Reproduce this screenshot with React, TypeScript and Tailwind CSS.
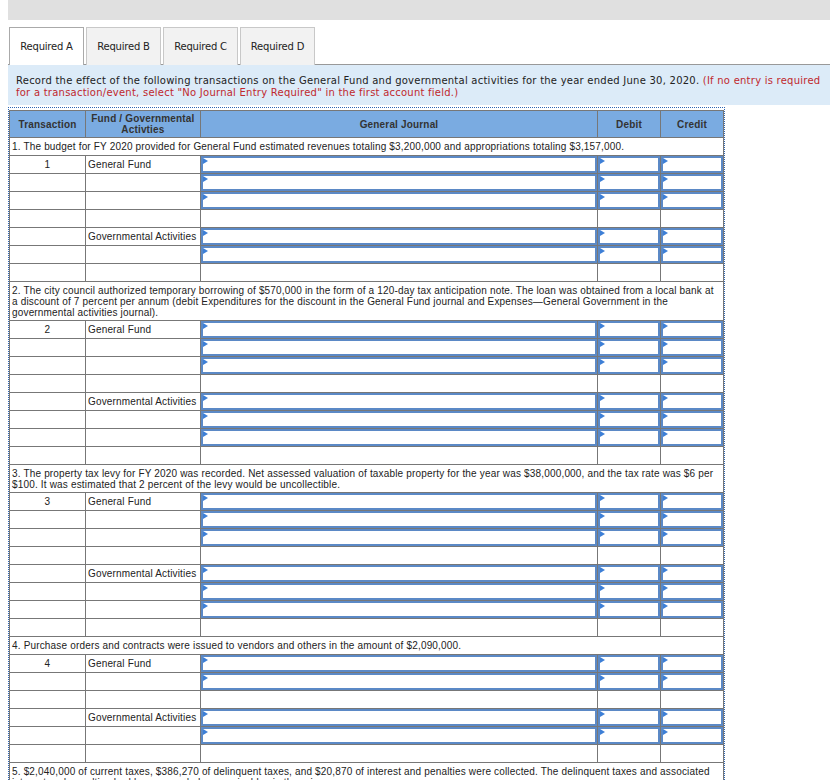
import React from 'react';

type Row =
  | { kind: 'desc'; text: string }
  | { kind: 'entry'; num?: string; fund?: string; input: boolean };

const desc = (text: string): Row => ({ kind: 'desc', text });
const entry = (input: boolean, fund?: string, num?: string): Row => ({ kind: 'entry', input, fund, num });

const rows: Row[] = [
  desc('1. The budget for FY 2020 provided for General Fund estimated revenues totaling $3,200,000 and appropriations totaling $3,157,000.'),
  entry(true, 'General Fund', '1'),
  entry(true),
  entry(true),
  entry(false),
  entry(true, 'Governmental Activities'),
  entry(true),
  entry(false),
  desc(
    '2. The city council authorized temporary borrowing of $570,000 in the form of a 120-day tax anticipation note. The loan was obtained from a local bank at a discount of 7 percent per annum (debit Expenditures for the discount in the General Fund journal and Expenses\u2014General Government in the governmental activities journal).'
  ),
  entry(true, 'General Fund', '2'),
  entry(true),
  entry(true),
  entry(false),
  entry(true, 'Governmental Activities'),
  entry(true),
  entry(true),
  entry(false),
  desc(
    '3. The property tax levy for FY 2020 was recorded. Net assessed valuation of taxable property for the year was $38,000,000, and the tax rate was $6 per $100. It was estimated that 2 percent of the levy would be uncollectible.'
  ),
  entry(true, 'General Fund', '3'),
  entry(true),
  entry(true),
  entry(false),
  entry(true, 'Governmental Activities'),
  entry(true),
  entry(true),
  entry(false),
  desc('4. Purchase orders and contracts were issued to vendors and others in the amount of $2,090,000.'),
  entry(true, 'General Fund', '4'),
  entry(true),
  entry(false),
  entry(true, 'Governmental Activities'),
  entry(true),
  entry(false),
  desc(
    '5. $2,040,000 of current taxes, $386,270 of delinquent taxes, and $20,870 of interest and penalties were collected. The delinquent taxes and associated interest and penalties had been recorded as receivables in the prior year.'
  ),
  entry(true, 'General Fund', '5'),
  entry(true),
  entry(true),
];

const InputBox = () => (
  <div className="relative h-[17px] border-2 border-[#5b89c6] bg-white">
    <span className="absolute left-0 top-0 h-0 w-0 border-y-[3px] border-l-[5px] border-y-transparent border-l-[#3d7fd6]" />
  </div>
);

const tabs = ['Required A', 'Required B', 'Required C', 'Required D'];

export default function App() {
  return (
    <div className="min-h-screen bg-white px-2 text-[#222]" style={{ fontFamily: '"Liberation Sans", Arial, sans-serif' }}>
      <div className="h-[20px] w-[822px] bg-[#e0e0e0]" />

      <div className="mt-[7px] flex w-[822px] gap-[2px] border-b border-[#999] pl-px" style={{ fontFamily: '"DejaVu Sans", Verdana, sans-serif' }}>
        {tabs.map((t, i) => (
          <div
            key={t}
            className={`-mb-px flex h-[38px] w-[75px] items-center justify-center border border-b-0 text-[10px] tracking-[-0.2px] ${
              i === 0 ? 'border-[#aaa] bg-white' : 'border-[#c8c8c8] bg-[#f2f2f2]'
            }`}
          >
            {t}
          </div>
        ))}
      </div>

      <div
        className="w-[822px] bg-[#dcebf8] px-2 pb-[6px] pt-[10px] text-[10px] leading-[12px] tracking-[0.24px] text-[#222]"
        style={{ fontFamily: '"DejaVu Sans", Verdana, sans-serif' }}
      >
        Record the effect of the following transactions on the General Fund and governmental activities for the year ended June 30, 2020.{' '}
        <span className="text-[#c0282d]">
          (If no entry is required for a transaction/event, select "No Journal Entry Required" in the first account field.)
        </span>
      </div>

      <div className="mt-[2px] w-[717px] border border-dotted border-[#2f66b3] pt-[2px]">
        <table className="w-[715px] border-collapse text-[10px] leading-[11px] tracking-[0.17px]">
          <colgroup>
            <col className="w-[76px]" />
            <col className="w-[115px]" />
            <col className="w-[398px]" />
            <col className="w-[63px]" />
            <col className="w-[63px]" />
          </colgroup>
          <thead>
            <tr className="h-[27px] bg-[#7aabe1] font-bold text-[#333]">
              <th className="border border-[#777] px-1 text-center font-bold">Transaction</th>
              <th className="border border-[#777] px-1 text-center font-bold">
                Fund / Governmental
                <br />
                Activties
              </th>
              <th className="border border-[#777] px-1 text-center font-bold">General Journal</th>
              <th className="border border-[#777] px-1 text-center font-bold">Debit</th>
              <th className="border border-[#777] px-1 text-center font-bold">Credit</th>
            </tr>
          </thead>
          <tbody>
            {rows.map((r, i) =>
              r.kind === 'desc' ? (
                <tr key={i}>
                  <td colSpan={5} className="h-[18px] border border-[#777] px-[2px] pb-[2px] pt-[3px] text-left align-top">
                    {r.text}
                  </td>
                </tr>
              ) : (
                <tr key={i} className="h-[18px]">
                  <td className="border border-[#777] p-0 text-center">{r.num}</td>
                  <td className="border border-[#777] px-[2px] py-0 text-left">{r.fund}</td>
                  <td className="border border-[#777] p-0 align-top">{r.input && <InputBox />}</td>
                  <td className="border border-[#777] p-0 align-top">{r.input && <InputBox />}</td>
                  <td className="border border-[#777] p-0 align-top">{r.input && <InputBox />}</td>
                </tr>
              )
            )}
          </tbody>
        </table>
      </div>
    </div>
  );
}
